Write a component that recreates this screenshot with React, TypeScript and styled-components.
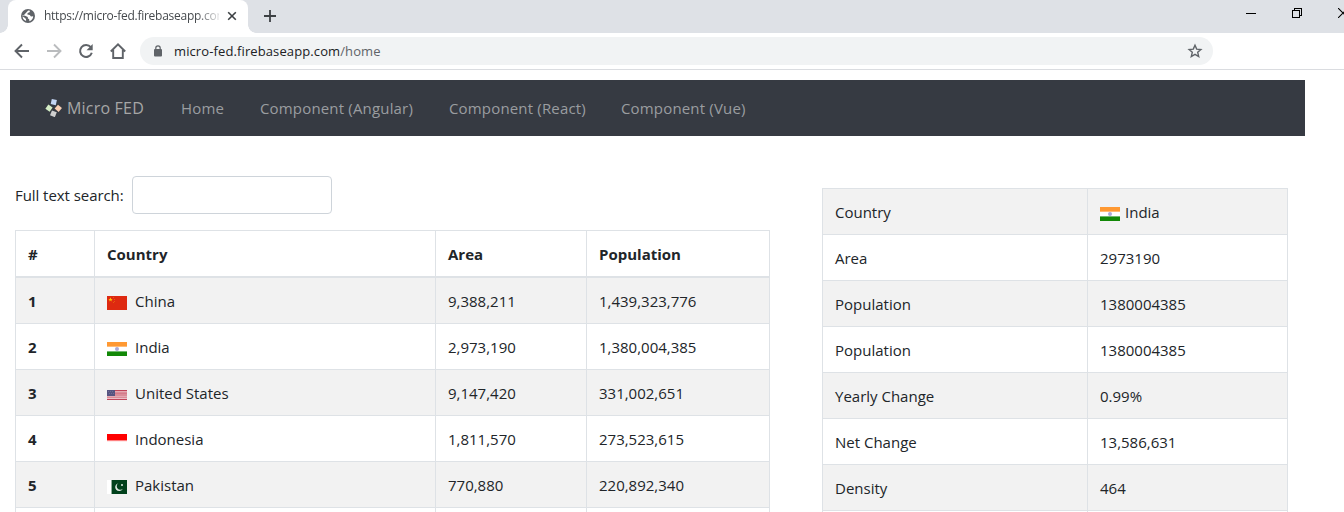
import React from 'react';
import styled, { createGlobalStyle, css } from 'styled-components';

const GlobalStyle = createGlobalStyle`
  * { box-sizing: border-box; }
  body {
    margin: 0;
    background: #fff;
    color: #212529;
    font-family: 'Open Sans', 'Noto Sans', sans-serif;
    font-size: 15px;
    line-height: 24px;
  }
  svg { display: block; flex: none; }
`;

const Window = styled.div`
  width: 1344px;
  height: 512px;
  overflow: hidden;
  background: #fff;
`;

/* ---------- Browser chrome ---------- */

const TabStrip = styled.div`
  display: flex;
  height: 33px;
  padding-left: 8px;
  background: #dee1e6;
`;

const Tab = styled.div`
  position: relative;
  display: flex;
  align-items: center;
  width: 240px;
  height: 33px;
  padding: 0 9px 2px 13px;
  border-radius: 8px 8px 0 0;
  background: #fff;

  &::before,
  &::after {
    content: '';
    position: absolute;
    bottom: 0;
    width: 8px;
    height: 8px;
  }
  &::before {
    left: -8px;
    background: radial-gradient(circle at 0 0, transparent 7.5px, #fff 8px);
  }
  &::after {
    right: -8px;
    background: radial-gradient(circle at 100% 0, transparent 7.5px, #fff 8px);
  }
`;

const TabTitle = styled.span`
  width: 175px;
  margin: 0 8px 0 9px;
  overflow: hidden;
  white-space: nowrap;
  font-size: 12px;
  line-height: 16px;
  letter-spacing: -0.26px;
  color: #45494d;
  mask-image: linear-gradient(to right, #000 152px, transparent 179px);
`;

const NewTab = styled.div`
  display: flex;
  align-items: center;
  margin-left: 16px;
  padding-bottom: 1px;
`;

const WindowControls = styled.div`
  display: flex;
  width: 98px;
  height: 26px;
  margin-left: auto;
  align-items: center;
  justify-content: space-between;
  overflow: hidden;
`;

const Toolbar = styled.div`
  display: flex;
  align-items: center;
  height: 37px;
  padding-left: 14px;
  border-bottom: 1px solid #dadce0;
`;

const NavIcons = styled.div`
  display: flex;
  gap: 16px;
  width: 126px;
`;

const AddressBar = styled.div`
  display: flex;
  align-items: center;
  width: 1073px;
  height: 28px;
  padding: 0 10px 0 12px;
  border-radius: 14px;
  background: #f1f3f4;
`;

const Url = styled.span`
  flex: 1;
  margin-left: 10px;
  font-size: 13px;
  line-height: 20px;
  letter-spacing: 0.11px;
  color: #202124;
`;

const UrlPath = styled.span`
  color: #5f6368;
`;

/* ---------- Page ---------- */

const Navbar = styled.nav`
  display: flex;
  align-items: center;
  width: 1295px;
  height: 56px;
  margin: 10px 0 0 10px;
  padding-left: 35px;
  background: #363a42;
  color: #9a9da0;
`;

const Brand = styled.div`
  display: flex;
  align-items: center;
  gap: 4px;
  width: 136px;
  font-size: 16px;
  letter-spacing: 0.2px;
  color: #a6a6a6;
`;

const NavLink = styled.a<{ $width: number }>`
  width: ${p => p.$width}px;
  white-space: nowrap;
  letter-spacing: 0.17px;
`;

const Content = styled.main`
  display: flex;
  align-items: flex-start;
  padding-left: 15px;
`;

const ListPanel = styled.section`
  width: 755px;
  margin-top: 40px;
`;

const DetailPanel = styled.section`
  width: 466px;
  margin: 52px 0 0 52px;
`;

const SearchRow = styled.label`
  display: flex;
  align-items: center;
  height: 38px;
  margin-bottom: 16px;
`;

const SearchLabel = styled.span`
  width: 117px;
  letter-spacing: -0.06px;
`;

const SearchInput = styled.input`
  width: 200px;
  height: 38px;
  padding: 6px 12px;
  border: 1px solid #ced4da;
  border-radius: 4px;
  background: #fff;
`;

const Table = styled.div`
  border: solid #dee2e6;
  border-width: 1px 0 0 1px;
`;

const Cell = styled.div<{ $bold?: boolean; $gap?: number }>`
  display: flex;
  align-items: center;
  gap: ${p => p.$gap ?? 0}px;
  padding: 1px 12px 0;
  border: solid #dee2e6;
  border-width: 0 1px 1px 0;
  font-weight: ${p => (p.$bold ? 700 : 'inherit')};
`;

const Row = styled.div<{ $columns: string; $striped?: boolean; $head?: boolean }>`
  display: grid;
  grid-template-columns: ${p => p.$columns};
  height: ${p => (p.$head ? 47 : 46)}px;
  background: ${p => (p.$striped ? '#f2f2f2' : '#fff')};
  ${p =>
    p.$head &&
    css`
      font-weight: 700;
      && > ${Cell} {
        border-bottom-width: 2px;
      }
    `}
`;

const FlagBox = styled.span`
  padding-top: 4px;
`;

type Country = 'China' | 'India' | 'United States' | 'Indonesia' | 'Pakistan';

const Flag = ({ country }: { country: Country }) => {
  const box = (h: number, children: React.ReactNode) => (
    <FlagBox>
      <svg width="20" height={h} viewBox={`0 0 20 ${h}`} shapeRendering="crispEdges">
        {children}
      </svg>
    </FlagBox>
  );
  switch (country) {
    case 'China':
      return box(14, <>
        <rect width="20" height="14" fill="#de2910" />
        <path d="M3.5 1.3l.6 1.6h1.6L4.4 4l.5 1.6-1.4-1-1.4 1L2.6 4 1.3 2.9h1.6z" fill="#ffc400" shapeRendering="auto" />
        <g fill="#e9590f"><rect x="6" y="1" width="1" height="1" /><rect x="7" y="3" width="1" height="1" /><rect x="7" y="5" width="1" height="1" /><rect x="6" y="6" width="1" height="1" /></g>
      </>);
    case 'India':
      return box(14, <>
        <rect width="20" height="14" fill="#fff" />
        <rect width="20" height="4" fill="#ff9933" />
        <rect y="4" width="20" height="1" fill="#ffbb77" />
        <rect y="9" width="20" height="1" fill="#70b970" />
        <rect y="10" width="20" height="4" fill="#128807" />
        <circle cx="10" cy="7" r="2" fill="#aaaad8" shapeRendering="auto" />
      </>);
    case 'United States':
      return box(10, <>
        <rect width="20" height="10" fill="#d98c98" />
        <rect width="20" height="1" fill="#bf4459" />
        <rect y="9" width="20" height="1" fill="#bf4459" />
        <rect y="1" width="20" height="1" fill="#e3a9b2" />
        <rect y="3" width="20" height="1" fill="#d47b8a" />
        <rect y="6" width="20" height="1" fill="#e3a9b2" />
        <rect y="8" width="20" height="1" fill="#ebc1c8" />
        <rect width="8" height="6" fill="#565480" />
        <g fill="#6f6e95"><rect x="1" y="1" width="1" height="1" /><rect x="3" y="1" width="1" height="1" /><rect x="5" y="1" width="1" height="1" /><rect x="2" y="3" width="1" height="1" /><rect x="4" y="3" width="1" height="1" /><rect x="6" y="3" width="1" height="1" /></g>
      </>);
    case 'Indonesia':
      return box(14, <>
        <rect width="20" height="14" fill="#fff" />
        <rect width="20" height="6" fill="#f00" />
        <rect y="6" width="20" height="1" fill="#ff8080" />
        <rect y="7" width="20" height="1" fill="#ffeaea" />
      </>);
    case 'Pakistan':
      return box(14, <>
        <rect width="20" height="14" fill="#fff" />
        <rect x="4" width="1" height="14" fill="#8fac9b" />
        <rect x="5" width="15" height="14" fill="#01411c" />
        <path d="M11.3 3.2a4 4 0 1 0 4.6 5.5 3.6 3.6 0 1 1-4.6-5.5z" fill="#dfe8e2" shapeRendering="auto" />
        <rect x="14" y="4" width="2" height="2" fill="#a8c0b1" />
      </>);
  }
};

const GlobeIcon = () => (
  <svg width="14" height="14" viewBox="0 0 14 14">
    <circle cx="7" cy="7" r="7" fill="#5f6368" />
    <path d="M7.2 1.6L9 1.8 8.6 3.3 6.6 4.1 6.4 5.6 8.7 6.1 10 7.4 12.2 7.3A5.4 5.4 0 0 1 8.4 12.2L8.2 10.3 6.9 9.6 6.8 8 4.6 7.1 1.7 6A5.5 5.5 0 0 0 5.1 12.1L5 10.1 3.3 8.5 1.6 7.5" fill="#fff" />
  </svg>
);

const CloseTabIcon = () => (
  <svg width="10" height="10" viewBox="0 0 10 10" fill="none" stroke="#3c4043" strokeWidth="1.6">
    <path d="M1.2 1.2l7.6 7.6M8.8 1.2l-7.6 7.6" />
  </svg>
);

const PlusIcon = () => (
  <svg width="12" height="12" viewBox="0 0 12 12" fill="none" stroke="#3c4043" strokeWidth="1.8">
    <path d="M6 0v12M0 6h12" />
  </svg>
);

const ArrowIcon = ({ color, forward }: { color: string; forward?: boolean }) => (
  <svg width="16" height="16" viewBox="0 0 16 16" fill="none" stroke={color} strokeWidth="1.9">
    <path d={forward ? 'M1 8h13M8 1.5L14.5 8 8 14.5' : 'M15 8H2M8 1.5L1.5 8 8 14.5'} />
  </svg>
);

const ReloadIcon = () => (
  <svg width="16" height="16" viewBox="0 0 16 16">
    <path d="M12.8 4.2A6 6 0 1 0 13.8 9.8" fill="none" stroke="#5f6368" strokeWidth="2" />
    <path d="M14.7 1v6.2H8.5z" fill="#5f6368" />
  </svg>
);

const HomeIcon = () => (
  <svg width="16" height="16" viewBox="0 0 16 16" fill="none" stroke="#5f6368" strokeWidth="1.9">
    <path d="M.8 8.5L8 1.4l7.2 7.1M3.2 7v8h9.6V7" />
  </svg>
);

const LockIcon = () => (
  <svg width="12" height="12" viewBox="0 0 12 12">
    <rect x="2" y="4" width="8" height="7.5" rx="1" fill="#5f6368" />
    <path d="M3.8 4.5V3a2.2 2.2 0 0 1 4.4 0v1.5" fill="none" stroke="#5f6368" strokeWidth="1.2" />
  </svg>
);

const StarIcon = () => (
  <svg width="16" height="16" viewBox="0 0 16 16" fill="none" stroke="#5f6368" strokeWidth="1.4">
    <path d="M8 2.2l1.7 3.9 4.2.4-3.2 2.8 1 4.2L8 11.3l-3.7 2.2 1-4.2-3.2-2.8 4.2-.4z" />
  </svg>
);

const MinimizeIcon = () => (
  <svg width="10" height="10" viewBox="0 0 10 10" shapeRendering="crispEdges">
    <rect y="5" width="10" height="1" fill="#000" />
  </svg>
);

const RestoreIcon = () => (
  <svg width="10" height="10" viewBox="0 0 10 10" fill="none" stroke="#000" shapeRendering="crispEdges">
    <path d="M.5 2.5h7v7h-7zM2.5 2.5v-2h7v7h-2" />
  </svg>
);

const CloseWindowIcon = () => (
  <svg width="6" height="10" viewBox="0 0 6 10" fill="none" stroke="#000" strokeWidth="1.1">
    <path d="M0 0l10 10M0 10L10 0" />
  </svg>
);

const BrandMark = () => (
  <svg width="18" height="18" viewBox="0 0 18 18">
    <rect x="-2.6" y="-2.6" width="5.2" height="5.2" transform="translate(8.8 3.1) rotate(12)" fill="#c3d5f3" />
    <rect x="-2.6" y="-2.6" width="5.2" height="5.2" transform="translate(4 9.1) rotate(35)" fill="#d5edc6" />
    <rect x="-2.6" y="-2.6" width="5.2" height="5.2" transform="translate(13.3 9.3) rotate(40)" fill="#f9cfb4" />
    <rect x="-2.6" y="-2.6" width="5.2" height="5.2" transform="translate(8.4 14.8) rotate(22)" fill="#cfcfcf" />
  </svg>
);

const links = [
  { label: 'Home', width: 79 },
  { label: 'Component (Angular)', width: 189 },
  { label: 'Component (React)', width: 172 },
  { label: 'Component (Vue)', width: 130 },
];

const countries: { name: Country; area: string; population: string }[] = [
  { name: 'China', area: '9,388,211', population: '1,439,323,776' },
  { name: 'India', area: '2,973,190', population: '1,380,004,385' },
  { name: 'United States', area: '9,147,420', population: '331,002,651' },
  { name: 'Indonesia', area: '1,811,570', population: '273,523,615' },
  { name: 'Pakistan', area: '770,880', population: '220,892,340' },
];

const details: [string, string][] = [
  ['Area', '2973190'],
  ['Population', '1380004385'],
  ['Population', '1380004385'],
  ['Yearly Change', '0.99%'],
  ['Net Change', '13,586,631'],
  ['Density', '464'],
];

const LIST_COLUMNS = '79px 341px 151px 183px';
const DETAIL_COLUMNS = '265px 200px';

export default function App() {
  return (
    <Window>
      <GlobalStyle />
      <TabStrip>
        <Tab>
          <GlobeIcon />
          <TabTitle>https://micro-fed.firebaseapp.com</TabTitle>
          <CloseTabIcon />
        </Tab>
        <NewTab><PlusIcon /></NewTab>
        <WindowControls>
          <MinimizeIcon />
          <RestoreIcon />
          <CloseWindowIcon />
        </WindowControls>
      </TabStrip>
      <Toolbar>
        <NavIcons>
          <ArrowIcon color="#5f6368" />
          <ArrowIcon color="#babcbe" forward />
          <ReloadIcon />
          <HomeIcon />
        </NavIcons>
        <AddressBar>
          <LockIcon />
          <Url>micro-fed.firebaseapp.com<UrlPath>/home</UrlPath></Url>
          <StarIcon />
        </AddressBar>
      </Toolbar>

      <Navbar>
        <Brand><BrandMark />Micro FED</Brand>
        {links.map(l => <NavLink key={l.label} $width={l.width}>{l.label}</NavLink>)}
      </Navbar>

      <Content>
        <ListPanel>
          <SearchRow>
            <SearchLabel>Full text search:</SearchLabel>
            <SearchInput type="text" />
          </SearchRow>
          <Table>
            <Row $columns={LIST_COLUMNS} $head>
              <Cell>#</Cell>
              <Cell>Country</Cell>
              <Cell>Area</Cell>
              <Cell>Population</Cell>
            </Row>
            {countries.map((c, i) => (
              <Row key={c.name} $columns={LIST_COLUMNS} $striped={i % 2 === 0}>
                <Cell $bold>{i + 1}</Cell>
                <Cell $gap={8}><Flag country={c.name} />{c.name}</Cell>
                <Cell>{c.area}</Cell>
                <Cell>{c.population}</Cell>
              </Row>
            ))}
            <Row $columns={LIST_COLUMNS}><Cell /><Cell /><Cell /><Cell /></Row>
          </Table>
        </ListPanel>

        <DetailPanel>
          <Table>
            <Row $columns={DETAIL_COLUMNS} $striped>
              <Cell>Country</Cell>
              <Cell $gap={5}><Flag country="India" />India</Cell>
            </Row>
            {details.map(([label, value], i) => (
              <Row key={i} $columns={DETAIL_COLUMNS} $striped={i % 2 === 1}>
                <Cell>{label}</Cell>
                <Cell>{value}</Cell>
              </Row>
            ))}
            <Row $columns={DETAIL_COLUMNS}><Cell /><Cell /></Row>
          </Table>
        </DetailPanel>
      </Content>
    </Window>
  );
}
